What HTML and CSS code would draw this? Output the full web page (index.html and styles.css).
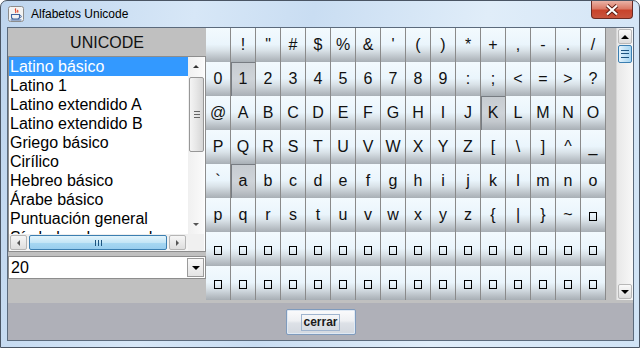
FILE: index.html
```html
<!DOCTYPE html>
<html>
<head>
    <title>Alfabetos Unicode</title>
    <meta charset="utf-8">
    <link rel="stylesheet" href="styles.css">
</head>
<body>
<div class="window">
    <div class="titlebar">
        <svg class="appicon" width="16" height="16" viewBox="0 0 16 16">
            <rect x="0.5" y="0.5" width="15" height="15" rx="2" fill="#f3f3f3" stroke="#8c8c8c"/>
            <path d="M8 2.5c-2 1.5 1 2.5 -0.5 4.5M10 4c-1 1 0.5 1.5 -0.5 2.5" stroke="#e2462a" stroke-width="1.2" fill="none"/>
            <path d="M3.5 8.5h8v2.5c0 1.2 -1 2 -2 2h-4c-1 0 -2 -0.8 -2 -2z" fill="none" stroke="#3f64a0" stroke-width="1.1"/>
            <path d="M11.5 9.5h1c1 0 1 2 0 2h-1" fill="none" stroke="#3f64a0"/>
            <path d="M2.5 14h11" stroke="#3f64a0"/>
        </svg>
        <span class="title">Alfabetos Unicode</span>
        <div class="close">
            <svg width="16" height="12" viewBox="0 0 16 12">
                <path d="M3 1.5l10 9M13 1.5l-10 9" stroke="#5a1a10" stroke-width="4"/>
                <path d="M3 1.5l10 9M13 1.5l-10 9" stroke="#fff" stroke-width="2.2"/>
            </svg>
        </div>
    </div>
    <div class="client">
        <div class="main">
            <div class="side">
                <div class="side-head">UNICODE</div>
                <div class="list">
                    <ul class="items">
                        <li class="sel">Latino básico</li>
                        <li>Latino 1</li>
                        <li>Latino extendido A</li>
                        <li>Latino extendido B</li>
                        <li>Griego básico</li>
                        <li>Cirílico</li>
                        <li>Hebreo básico</li>
                        <li>Árabe básico</li>
                        <li>Puntuación general</li>
                        <li>Símbolos de moneda</li>
                    </ul>
                    <div class="lvbar">
                        <div class="arr up"></div>
                        <div class="lthumb"><i class="grip-h"></i></div>
                        <div class="lfill"></div>
                        <div class="arr down"></div>
                    </div>
                    <div class="hbar">
                        <div class="hbtn"><i class="arr-l"></i></div>
                        <div class="hthumb"><i class="grip-v"></i></div>
                        <div class="hbtn"><i class="arr-r"></i></div>
                    </div>
                    <div class="corner"></div>
                </div>
                <div class="combo">
                    <span class="combo-val">20</span>
                    <div class="combo-btn"><i class="arr-d"></i></div>
                </div>
            </div>
            <div class="chars">
                <div class="cell"></div><div class="cell">!</div><div class="cell">&quot;</div><div class="cell">#</div>
                <div class="cell">$</div><div class="cell">%</div><div class="cell">&amp;</div><div class="cell">'</div>
                <div class="cell">(</div><div class="cell">)</div><div class="cell">*</div><div class="cell">+</div>
                <div class="cell">,</div><div class="cell">-</div><div class="cell">.</div><div class="cell">/</div>

                <div class="cell">0</div><div class="cell on">1</div><div class="cell">2</div><div class="cell">3</div>
                <div class="cell">4</div><div class="cell">5</div><div class="cell">6</div><div class="cell">7</div>
                <div class="cell">8</div><div class="cell">9</div><div class="cell">:</div><div class="cell">;</div>
                <div class="cell">&lt;</div><div class="cell">=</div><div class="cell">&gt;</div><div class="cell">?</div>

                <div class="cell">@</div><div class="cell">A</div><div class="cell">B</div><div class="cell">C</div>
                <div class="cell">D</div><div class="cell">E</div><div class="cell">F</div><div class="cell">G</div>
                <div class="cell">H</div><div class="cell">I</div><div class="cell">J</div><div class="cell on">K</div>
                <div class="cell">L</div><div class="cell">M</div><div class="cell">N</div><div class="cell">O</div>

                <div class="cell">P</div><div class="cell">Q</div><div class="cell">R</div><div class="cell">S</div>
                <div class="cell">T</div><div class="cell">U</div><div class="cell">V</div><div class="cell">W</div>
                <div class="cell">X</div><div class="cell">Y</div><div class="cell">Z</div><div class="cell">[</div>
                <div class="cell">\</div><div class="cell">]</div><div class="cell">^</div><div class="cell">_</div>

                <div class="cell">`</div><div class="cell on">a</div><div class="cell">b</div><div class="cell">c</div>
                <div class="cell">d</div><div class="cell">e</div><div class="cell">f</div><div class="cell">g</div>
                <div class="cell">h</div><div class="cell">i</div><div class="cell">j</div><div class="cell">k</div>
                <div class="cell">l</div><div class="cell">m</div><div class="cell">n</div><div class="cell">o</div>

                <div class="cell">p</div><div class="cell">q</div><div class="cell">r</div><div class="cell">s</div>
                <div class="cell">t</div><div class="cell">u</div><div class="cell">v</div><div class="cell">w</div>
                <div class="cell">x</div><div class="cell">y</div><div class="cell">z</div><div class="cell">{</div>
                <div class="cell">|</div><div class="cell">}</div><div class="cell">~</div><div class="cell"><i class="tofu"></i></div>

                <div class="cell"><i class="tofu"></i></div><div class="cell"><i class="tofu"></i></div><div class="cell"><i class="tofu"></i></div><div class="cell"><i class="tofu"></i></div>
                <div class="cell"><i class="tofu"></i></div><div class="cell"><i class="tofu"></i></div><div class="cell"><i class="tofu"></i></div><div class="cell"><i class="tofu"></i></div>
                <div class="cell"><i class="tofu"></i></div><div class="cell"><i class="tofu"></i></div><div class="cell"><i class="tofu"></i></div><div class="cell"><i class="tofu"></i></div>
                <div class="cell"><i class="tofu"></i></div><div class="cell"><i class="tofu"></i></div><div class="cell"><i class="tofu"></i></div><div class="cell"><i class="tofu"></i></div>

                <div class="cell"><i class="tofu"></i></div><div class="cell"><i class="tofu"></i></div><div class="cell"><i class="tofu"></i></div><div class="cell"><i class="tofu"></i></div>
                <div class="cell"><i class="tofu"></i></div><div class="cell"><i class="tofu"></i></div><div class="cell"><i class="tofu"></i></div><div class="cell"><i class="tofu"></i></div>
                <div class="cell"><i class="tofu"></i></div><div class="cell"><i class="tofu"></i></div><div class="cell"><i class="tofu"></i></div><div class="cell"><i class="tofu"></i></div>
                <div class="cell"><i class="tofu"></i></div><div class="cell"><i class="tofu"></i></div><div class="cell"><i class="tofu"></i></div><div class="cell"><i class="tofu"></i></div>
            </div>
            <div class="gap"></div>
            <div class="vbar">
                <div class="vbtn"><i class="arr-u"></i></div>
                <div class="vthumb"><i class="grip-h"></i></div>
                <div class="vfill"></div>
                <div class="vbtn"><i class="arr-d"></i></div>
            </div>
        </div>
        <div class="footer">
            <div class="btn"><span>cerrar</span></div>
        </div>
    </div>
</div>
</body>
</html>
```

FILE: styles.css
```css
body {
    margin: 0px;
    background-color: #fff;
    font-family: "Liberation Sans", Arial, sans-serif;
}

.window {
    width: 640px;
    height: 348px;
    box-sizing: border-box;
    border: 1px solid #4a5564;
    border-radius: 7px 7px 0 0;
    background: linear-gradient(100deg, #bed5ee 0%, #d7e7f7 28%, #c9ddf2 45%, #e0edf9 70%, #d0e3f5 100%);
    padding: 0 5px 6px 6px;
    display: flex;
    flex-direction: column;
}

/* title bar */
.titlebar {
    height: 26px;
    display: flex;
    align-items: center;
}
.appicon {
    margin-left: 1px;
    margin-bottom: 1px;
}
.title {
    margin-left: 7px;
    font-size: 12px;
    color: #000;
}
.close {
    margin-left: auto;
    margin-right: 1px;
    align-self: flex-start;
    width: 42px;
    height: 18px;
    box-sizing: border-box;
    border: 1px solid #6b2a22;
    border-top: none;
    border-radius: 0 0 4px 4px;
    background: linear-gradient(#eab3a6 0%, #db7a66 45%, #c8432b 55%, #c8553e 100%);
    display: flex;
    align-items: center;
    justify-content: center;
}

/* client area */
.client {
    flex: 1;
    border: 1px solid #5b6a7c;
    background-color: #c0c0c0;
    display: flex;
    flex-direction: column;
}
.main {
    display: flex;
    height: 272px;
}

/* left side */
.side {
    width: 198px;
    display: flex;
    flex-direction: column;
}
.side-head {
    height: 28px;
    line-height: 29px;
    text-align: center;
    font-size: 16px;
    color: #111;
}
.list {
    height: 196px;
    box-sizing: border-box;
    border: 1px solid #8d8d8d;
    background-color: #fff;
    display: grid;
    grid-template-columns: 1fr 16px;
    grid-template-rows: 1fr 17px;
    padding-right: 1px;
}
.items {
    margin: 0;
    padding: 0;
    list-style: none;
    overflow: hidden;
}
.items li {
    height: 19px;
    line-height: 19px;
    font-size: 16px;
    color: #000;
    padding-left: 1px;
    white-space: nowrap;
}
.items li.sel {
    background-color: #3399ff;
    color: #fff;
}

.lvbar {
    display: flex;
    flex-direction: column;
    background: linear-gradient(to right, #f0f0f0, #fafafa);
}
.arr {
    height: 19px;
    display: flex;
    align-items: center;
    justify-content: center;
}
.arr.up::after {
    content: "";
    border-left: 3px solid transparent;
    border-right: 3px solid transparent;
    border-bottom: 3px solid #333;
}
.arr.down::after {
    content: "";
    border-left: 3px solid transparent;
    border-right: 3px solid transparent;
    border-top: 3px solid #555;
}
.lthumb {
    height: 75px;
    margin: 1px 0 0 1px;
    box-sizing: border-box;
    border: 1px solid #979797;
    border-radius: 2px;
    background: linear-gradient(to right, #f4f4f4, #e6e6e6 50%, #d6d6d6);
    display: flex;
    align-items: center;
    justify-content: center;
}
.lfill {
    flex: 1;
}
.grip-h {
    width: 6px;
    height: 5px;
    border-top: 1px solid #666;
    border-bottom: 1px solid #666;
    background: linear-gradient(transparent 2px, #666 2px, #666 3px, transparent 3px);
}

.hbar {
    display: flex;
    align-items: center;
    gap: 2px;
    padding: 0 2px 0 1px;
    background: linear-gradient(#eeeeee, #f6f6f6);
}
.hbtn {
    width: 17px;
    height: 15px;
    box-sizing: border-box;
    border: 1px solid #b5b5b5;
    border-radius: 2px;
    background: linear-gradient(#f6f6f6, #dedede);
    display: flex;
    align-items: center;
    justify-content: center;
}
.arr-l {
    border-top: 3px solid transparent;
    border-bottom: 3px solid transparent;
    border-right: 3px solid #555;
}
.arr-r {
    border-top: 3px solid transparent;
    border-bottom: 3px solid transparent;
    border-left: 3px solid #555;
}
.hthumb {
    flex: 1;
    height: 15px;
    box-sizing: border-box;
    border: 1px solid #3c7fb1;
    border-radius: 2px;
    background: linear-gradient(#e3f4fc 0%, #c4e5f6 50%, #a8d8f2 51%, #98cdee 100%);
    display: flex;
    align-items: center;
    justify-content: center;
}
.grip-v {
    width: 5px;
    height: 6px;
    border-left: 1px solid #1d5480;
    border-right: 1px solid #1d5480;
    background: linear-gradient(to right, transparent 2px, #1d5480 2px, #1d5480 3px, transparent 3px);
}
.corner {
    background-color: #f0f0f0;
}

.combo {
    margin-top: 4px;
    height: 23px;
    box-sizing: border-box;
    border: 1px solid #8d8d8d;
    background-color: #fff;
    display: flex;
    align-items: center;
}
.combo-val {
    flex: 1;
    padding-left: 2px;
    font-size: 16px;
    color: #000;
}
.combo-btn {
    width: 17px;
    height: 19px;
    margin-right: 1px;
    box-sizing: border-box;
    border: 1px solid #9a9a9a;
    background: linear-gradient(#f8f8f8, #e4e4e4);
    display: flex;
    align-items: center;
    justify-content: center;
}
.arr-d {
    border-left: 4px solid transparent;
    border-right: 4px solid transparent;
    border-top: 4px solid #000;
}
.arr-u {
    border-left: 4px solid transparent;
    border-right: 4px solid transparent;
    border-bottom: 4px solid #000;
}

/* character grid */
.chars {
    width: 400px;
    display: grid;
    grid-template-columns: repeat(16, 25px);
    grid-template-rows: repeat(8, 34px);
}
.cell {
    box-sizing: border-box;
    border-right: 1px solid #8a8a8a;
    background: linear-gradient(#f3fafe 0%, #eaf5fc 48%, #d9e2e8 66%, #b9c0c6 88%, #a8afb5 100%);
    display: flex;
    align-items: center;
    justify-content: center;
    font-size: 16px;
    color: #111;
}
.cell.on {
    background: linear-gradient(#c6cbd0 0%, #cfd4d9 50%, #c3c8cd 75%, #a9afb5 100%);
    box-shadow: inset 1px 1px 0 #777c82;
}
.tofu {
    width: 6px;
    height: 7px;
    border: 1px solid #000;
    margin-top: 2px;
}

.gap {
    width: 10px;
}

/* main scroll bar */
.vbar {
    width: 17px;
    display: flex;
    flex-direction: column;
    background: linear-gradient(to right, #e8e8e8, #f8f8f8);
    border-left: 1px solid #d6d6d6;
    box-sizing: border-box;
}
.vbtn {
    height: 15px;
    margin: 1px 1px 0 1px;
    box-sizing: border-box;
    border: 1px solid #b8b8b8;
    border-radius: 2px;
    background: linear-gradient(#fafafa, #dcdcdc);
    display: flex;
    align-items: center;
    justify-content: center;
}
.vbar .vbtn:last-child {
    margin: 0 1px 1px 1px;
}
.vthumb {
    height: 18px;
    margin: 1px 1px 0 1px;
    box-sizing: border-box;
    border: 1px solid #3c7fb1;
    border-radius: 2px;
    background: linear-gradient(to right, #e4f3fc, #c2e2f6 50%, #a7d5f1);
    display: flex;
    align-items: center;
    justify-content: center;
}
.vthumb .grip-h {
    width: 8px;
    height: 6px;
    border-color: #1d5480;
    background: linear-gradient(transparent 2px, #1d5480 2px, #1d5480 3px, transparent 3px);
}
.vfill {
    flex: 1;
}

/* footer */
.footer {
    flex: 1;
    border-top: 3px solid #c0c0c0;
    background-color: #afb0b8;
    display: flex;
    justify-content: center;
    align-items: flex-start;
    padding-top: 6px;
}
.btn {
    width: 70px;
    height: 26px;
    box-sizing: border-box;
    border: 1px solid #7f9bbd;
    border-radius: 2px;
    box-shadow: inset 0 0 0 1px #dfe9f4;
    background: linear-gradient(#fbfbfc 0%, #eef0f3 45%, #dde1e7 55%, #d3d8df 100%);
    display: flex;
    align-items: center;
    justify-content: center;
}
.btn span {
    border: 1px solid #9fb4cf;
    padding: 0 1px;
    line-height: 15px;
    font-size: 12px;
    font-weight: bold;
    color: #1b1b1b;
}
```
